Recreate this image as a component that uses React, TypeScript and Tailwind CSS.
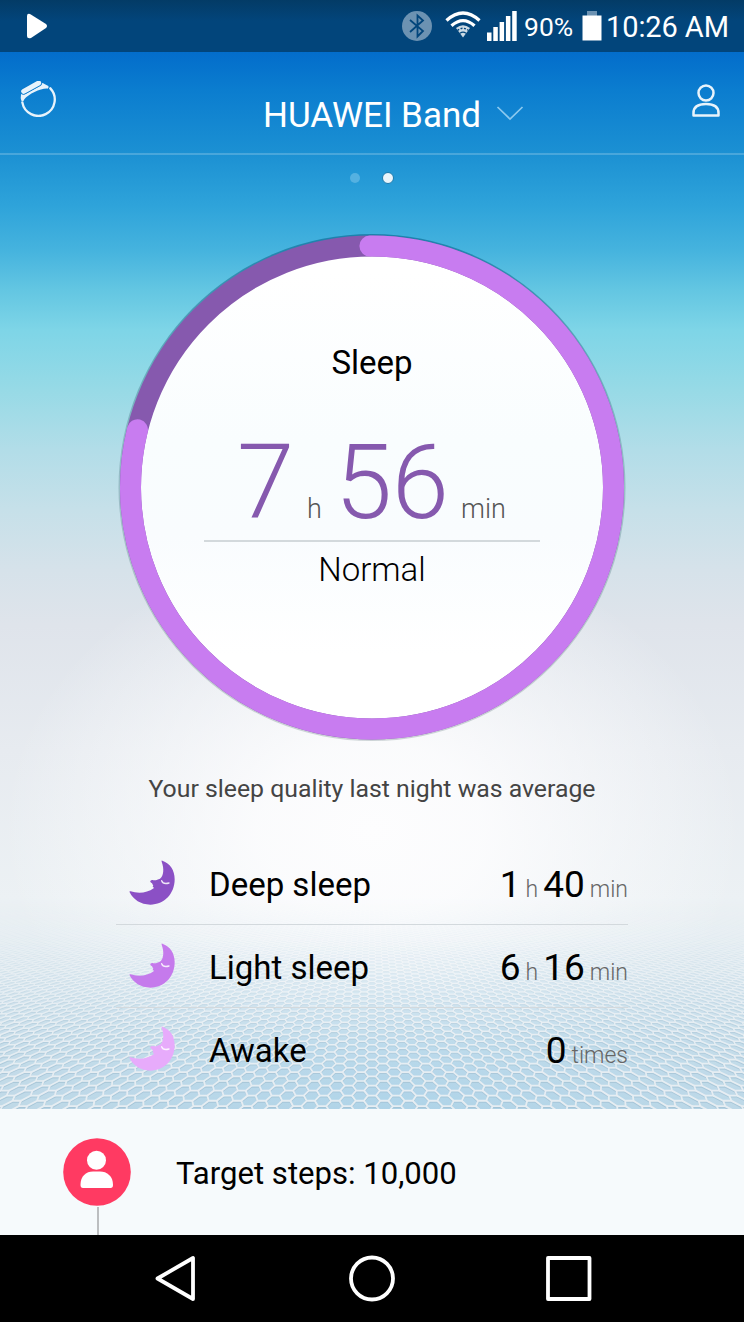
import { Fragment } from 'react';

const HORIZON = 795;
const FLOOR_BOTTOM = 1109;
const FLOOR_TOP = 895;

// One path per depth row, so that lines get thinner towards the horizon
function buildFloor() {
    const rows: { d: string; width: number }[] = [];
    const project = (x: number, z: number) =>
        `${(372 + x / z).toFixed(1)} ${(HORIZON - FLOOR_TOP + 312 / z).toFixed(2)}`;
    const stepZ = 0.0353;

    for (let r = -1; r < 62; r++) {
        const z0 = 0.985 + r * stepZ;
        const cols = Math.ceil((380 * z0) / 12.5) + 1;
        let d = '';
        for (let c = -cols; c <= cols; c++) {
            const x = c * 12.5;
            const z = z0 + (c % 2 === 0 ? 0 : stepZ / 2);
            d += `M${project(x - 4.17, z - stepZ / 2)}L${project(x + 4.17, z - stepZ / 2)}L${project(x + 8.33, z)}L${project(x + 4.17, z + stepZ / 2)}`;
        }
        rows.push({ d, width: 1.9 / z0 });
    }
    return rows;
}

const floorRows = buildFloor();

const sleepRows = [
    { label: 'Deep sleep', color: 'text-[#8b50c5]', values: [['1', 'h'], ['40', 'min']] },
    { label: 'Light sleep', color: 'text-[#c57aec]', values: [['6', 'h'], ['16', 'min']] },
    { label: 'Awake', color: 'text-[#e7abfb]', values: [['0', 'times']] },
];

function HoneycombFloor() {
    return (
        <svg
            className="absolute left-0 top-[895px] w-[744px] h-[214px]"
            viewBox={`0 0 744 ${FLOOR_BOTTOM - FLOOR_TOP}`}
            fill="none"
        >
            <defs>
                <linearGradient id="floorFade" x1="0" y1="0" x2="0" y2="1">
                    <stop offset="0" stopColor="#fff" stopOpacity="0" />
                    <stop offset="0.2" stopColor="#fff" stopOpacity="0.12" />
                    <stop offset="0.45" stopColor="#fff" stopOpacity="0.45" />
                    <stop offset="0.7" stopColor="#fff" stopOpacity="0.8" />
                    <stop offset="1" stopColor="#fff" stopOpacity="1" />
                </linearGradient>
                <radialGradient id="floorTint" gradientUnits="userSpaceOnUse" cx="400" cy="215" r="420">
                    <stop offset="0" stopColor="#aed3e8" />
                    <stop offset="1" stopColor="#c0d9e7" />
                </radialGradient>
                <mask id="floorMask">
                    <rect width="744" height="214" fill="url(#floorFade)" />
                </mask>
            </defs>
            <g mask="url(#floorMask)">
                <rect width="744" height="214" fill="url(#floorTint)" />
                <g stroke="#9fbfd2" opacity="0.75" transform="translate(0 1.3)">
                    {floorRows.map((row, i) => (
                        <path key={i} d={row.d} strokeWidth={row.width * 0.8} />
                    ))}
                </g>
                <g stroke="#e6edf2">
                    {floorRows.map((row, i) => (
                        <path key={i} d={row.d} strokeWidth={row.width} />
                    ))}
                </g>
            </g>
        </svg>
    );
}

function BandIcon() {
    return (
        <svg className="w-[36px] h-[36px]" viewBox="18 15 108 108" fill="none">
            <path d="M109 37A49 49 0 1 1 25 79" stroke="#e8f3fb" strokeWidth="7" strokeLinecap="round" />
            <path
                d="M21 56Q21 51 25 51L34 54L77 30L84 22Q86 20 90 23L103 30Q106 34 101 38C82 36 44 54 31 70L28 76L22 74Q19 65 21 56Z"
                fill="#e8f3fb"
            />
            <path d="M29 46L74 21" stroke="#0879cc" strokeWidth="20" strokeLinecap="round" />
            <path d="M29 46L74 21" stroke="#e8f3fb" strokeWidth="15" strokeLinecap="round" />
        </svg>
    );
}

function MoonIcon() {
    return (
        <svg className="w-[46px] h-[45px]" viewBox="27 30 138 135">
            <path
                fill="currentColor"
                d="M127 32C150 40 164 60 164 88C164 132 132 164 91 164C62 164 40 149 29 127C28 124 29 123 32 124C52 131 82 130 101 115C103 112 98 112 98 109L100 106C96 104 99 103 96 100C93 97 90 96 91 93C93 90 96 90 100 90.500C108 92 113 88 120 86C131 78 133 56 125 35C124 32 125 31 127 32Z"
            />
            <path d="M125 92Q129 104 147 99" fill="none" stroke="#fff" strokeOpacity="0.85" strokeWidth="4" strokeLinecap="round" />
        </svg>
    );
}

function StatusBar() {
    return (
        <div className="relative h-[52px] flex items-center bg-linear-to-b from-[#033b66] via-[#02457b] via-40% to-[#02457b] text-white">
            <svg className="ml-[27px] w-[21px] h-[26px]" viewBox="0 0 21 26" fill="#fff">
                <path d="M0 3Q0 0 3 1L19 11Q21 13 19 15L4 25Q0 26 0 23Z" />
            </svg>
            <svg className="ml-[354px] w-[30px] h-[30px]" viewBox="0 0 30 30" fill="none">
                <circle cx="15" cy="15" r="15" fill="#6c92b2" />
                <path d="M8 9l13 11-5.5 5.5V4.5L21 9.500 8 21" stroke="#02457b" strokeWidth="1.8" />
            </svg>
            <svg className="ml-[13px] mt-[-3px] w-[36px] h-[27px]" viewBox="0 0 36 27" fill="none">
                <g stroke="#fff" strokeWidth="3.300">
                    <path d="M1.500 9.500Q18-5.500 34.500 9.500" />
                    <path d="M6.500 14.800Q18 4.500 29.500 14.800" />
                </g>
                <path d="M11 17Q18 11.500 25 17L18 26.500Z" fill="#fff" fillOpacity="0.8" />
                <path d="M12.500 19.500Q18 15 23.500 19.500" stroke="#02457b" strokeWidth="1.300" strokeDasharray="2 1.500" />
                <path d="M15 22.300Q18 20 21 22.300" stroke="#02457b" strokeWidth="1.300" />
            </svg>
            <svg className="ml-[6px] w-[30px] h-[30px]" viewBox="0 0 30 30" fill="#fff">
                <path d="M0 21.500h4.500V30H0zM6.300 16h4.500v14H6.300zM12.600 11h4.500v19h-4.500zM18.900 5h4.500v25h-4.500zM25.200 0h4.500v30h-4.500z" />
            </svg>
            <span className="ml-[7px] w-[58px] pt-[2px] text-[26.5px] leading-[32px] whitespace-nowrap">90%</span>
            <svg className="w-[20px] h-[30px]" viewBox="0 0 20 30">
                <path d="M5 0h10v5H5z" fill="#6c92b2" />
                <path d="M.5 4.500h19V29.500H.5z" fill="#fff" />
            </svg>
            <span className="ml-[4px] pt-[2px] text-[29px] tracking-[-0.1px] leading-[32px] whitespace-nowrap">10:26 AM</span>
        </div>
    );
}

function Header() {
    return (
        <header className="relative h-[103px] flex items-start border-b-2 border-white/20 text-white">
            <div className="ml-[20px] mt-[29px]">
                <BandIcon />
            </div>
            <h1 className="ml-[207px] mt-[44px] w-[233px] text-[35px] leading-[40px] whitespace-nowrap">HUAWEI Band</h1>
            <svg className="mt-[54px] w-[28px] h-[15px]" viewBox="0 0 28 15" fill="none">
                <path d="M1.500 1L14 13L26.500 1" stroke="#8cc9ef" strokeWidth="1.700" />
            </svg>
            <svg className="ml-[168px] mt-[32px] w-[28px] h-[34px]" viewBox="0 0 28 34" fill="none" stroke="#e8f3fb" strokeWidth="2.500">
                <circle cx="14" cy="9" r="7.500" />
                <path d="M1.500 31.500V29C1.500 22 7 20 14 20S26.500 22 26.500 29V31.500Z" strokeLinejoin="round" />
            </svg>
        </header>
    );
}

function SleepRing() {
    const radius = 241.5;
    const length = 2 * Math.PI * radius;
    const progress = 0.7895;

    return (
        <div className="relative mx-auto mt-[51px] w-[508px] h-[508px] flex flex-col items-center">
            <svg className="absolute inset-0 w-[508px] h-[508px]" viewBox="0 0 508 508" fill="none">
                <defs>
                    <linearGradient id="dial" x1="0" y1="0" x2="0" y2="1">
                        <stop offset="0.05" stopColor="#ffffff" />
                        <stop offset="0.4" stopColor="#f9fdfe" />
                        <stop offset="0.6" stopColor="#f9fcfe" />
                        <stop offset="0.85" stopColor="#ffffff" />
                    </linearGradient>
                    <linearGradient id="rim" x1="0" y1="0" x2="0" y2="1">
                        <stop offset="0" stopColor="#0e6e98" stopOpacity="0.7" />
                        <stop offset="0.4" stopColor="#5f8f9a" stopOpacity="0.45" />
                        <stop offset="1" stopColor="#8a9a9e" stopOpacity="0.4" />
                    </linearGradient>
                </defs>
                <circle cx="254" cy="253.500" r="253.500" fill="url(#rim)" />
                <circle cx="254" cy="253.500" r="240" fill="url(#dial)" />
                <circle cx="254" cy="253.500" r={radius} stroke="#8659ae" strokeWidth="21" />
                <circle
                    cx="254"
                    cy="253.500"
                    r={radius}
                    stroke="#c87cf0"
                    strokeWidth="21"
                    strokeLinecap="round"
                    strokeDasharray={`${length * progress} ${length}`}
                    transform="rotate(-90.5 254 253.5)"
                />
            </svg>
            <h2 className="relative mt-[109px] text-[33px] leading-[40px] text-black">Sleep</h2>
            <div className="relative mt-[48px] w-[336px] h-[111px] flex items-baseline border-b-2 border-[#d3d9dc] font-light text-[#8659ae]">
                <span className="ml-[33px] w-[70px] text-[103px] leading-[104px]">7</span>
                <span className="w-[28px] text-[27px] text-[#555]">h</span>
                <span className="w-[126px] text-[103px] leading-[104px] tracking-[-0.5px]">56</span>
                <span className="text-[27px] text-[#555]">min</span>
            </div>
            <p className="relative mt-[8px] text-[33px] leading-[40px] font-light text-black">Normal</p>
        </div>
    );
}

export default function App() {
    return (
        <div className="relative w-[744px] h-[1322px] overflow-hidden bg-black font-['Roboto',sans-serif]">
            <div className="absolute left-0 top-0 w-[744px] h-[1109px] bg-[linear-gradient(180deg,#036dcb_52px,#0b7dcf_90px,#1c91d3_155px,#2ea3da_205px,#45b3de_250px,#63c6e2_290px,#7ed5e7_330px,#97dae6_390px,#b2dde8_450px,#c6e0e9_510px,#d6e2ea_570px,#dfe4eb_625px,#e7ebf0_750px,#ecf1f4_900px,#e6eff4_1000px,#dfebf2_1109px)]" />
            <div className="absolute left-0 top-[500px] w-[744px] h-[560px] bg-[radial-gradient(ellipse_370px_290px_at_372px_330px,#fdfdfe_0%,#fdfdfee0_30%,#fdfdfe70_65%,#fdfdfe00_100%)]" />
            <HoneycombFloor />

            <StatusBar />
            <Header />

            <main className="relative h-[954px]">
                <div className="flex h-[28px] items-end justify-center">
                    <span className="w-[10px] h-[10px] rounded-full bg-[#54b1e1]" />
                    <span className="ml-[22px] w-[12px] h-[12px] mb-[-1px] rounded-full border border-[#1a7aae] bg-[#eaf5fb]" />
                </div>
                <SleepRing />
                <p className="mt-[31px] text-center text-[24.8px] leading-[32px] text-[#444]">
                    Your sleep quality last night was average
                </p>
                <ul className="mt-[37px] ml-[116px] w-[512px]">
                    {sleepRows.map((row, i) => (
                        <li
                            key={row.label}
                            className={`h-[83px] flex items-center ${i < 2 ? 'border-b border-[#d3d9dd]' : ''}`}
                        >
                            <span className={`ml-[13px] mt-[-2px] ${row.color}`}>
                                <MoonIcon />
                            </span>
                            <span className="ml-[34px] pt-[3px] text-[33px] leading-[40px] text-black">{row.label}</span>
                            <span className="ml-auto pt-[4px] flex items-baseline text-black">
                                {row.values.map(([value, unit]) => (
                                    <Fragment key={unit}>
                                        <span className="ml-[5px] text-[37px] leading-[44px]">{value}</span>
                                        <span className="ml-[5px] text-[23px] font-light text-[#666]">{unit}</span>
                                    </Fragment>
                                ))}
                            </span>
                        </li>
                    ))}
                </ul>
            </main>

            <section className="relative h-[126px] flex bg-[#f6fafc]">
                <div className="ml-[63px] w-[68px] flex flex-col items-center">
                    <svg className="mt-[29px] w-[68px] h-[68px] shrink-0" viewBox="0 0 68 68">
                        <circle cx="34" cy="34" r="33.800" fill="#ff3a62" />
                        <circle cx="33.500" cy="22.300" r="9.500" fill="#fff" />
                        <path d="M17.500 47C17.500 38 23 33.500 30 33.500H37C44 33.500 50 38 50 47Q50 50 47.500 50H20Q17.500 50 17.500 47Z" fill="#fff" />
                    </svg>
                    <span className="mt-[1px] ml-[2px] w-[2px] flex-1 bg-[#bcbec0]" />
                </div>
                <p className="ml-[45px] mt-[45px] text-[31.1px] leading-[40px] text-black whitespace-nowrap">
                    Target steps: 10,000
                </p>
            </section>

            <nav className="relative h-[87px] bg-black flex">
                <svg className="ml-[155px] mt-[20px] w-[41px] h-[47px]" viewBox="0 0 41 47" fill="none">
                    <path d="M2.500 23.500L38 3V44Z" stroke="#fff" strokeWidth="3.800" strokeLinejoin="round" />
                </svg>
                <svg className="ml-[153px] mt-[20px] w-[46px] h-[47px]" viewBox="0 0 46 47" fill="none">
                    <circle cx="23" cy="23.500" r="21" stroke="#fff" strokeWidth="3.800" />
                </svg>
                <svg className="ml-[151px] mt-[21px] w-[46px] h-[45px]" viewBox="0 0 46 45" fill="none">
                    <path d="M2 2H43.500V43H2Z" stroke="#fff" strokeWidth="3.800" strokeLinejoin="round" />
                </svg>
            </nav>
        </div>
    );
}
